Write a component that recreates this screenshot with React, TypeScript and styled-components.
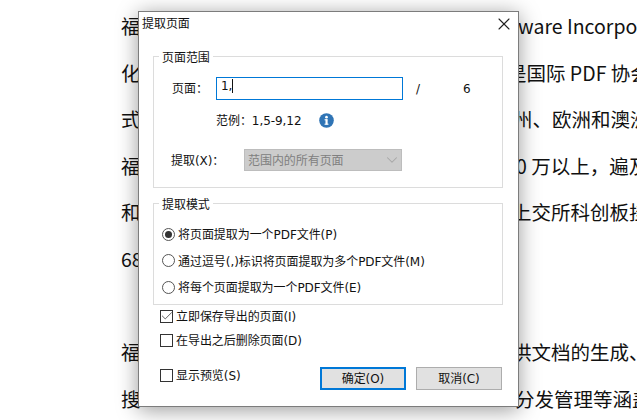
import React from 'react';
import styled, { createGlobalStyle } from 'styled-components';
import { FiX, FiCheck, FiChevronDown } from 'react-icons/fi';

const GlobalStyle = createGlobalStyle`
  html, body {
    margin: 0;
    padding: 0;
    width: 637px;
    height: 420px;
    overflow: hidden;
    background: #fff;
  }
  body {
    font-family: "Noto Sans CJK SC", "Liberation Sans", sans-serif;
  }
`;

const lines = [
  { left: '福', right: 'ware Incorporated', shift: 0 },
  { left: '化', right: '是国际 PDF 协会', shift: -11 },
  { left: '式', right: '州、欧洲和澳洲', shift: -5 },
  { left: '福', right: '0 万以上，遍及', shift: -2 },
  { left: '和', right: '上交所科创板挂', shift: -6 },
  { left: '68', right: '', shift: 0 },
  { left: '', right: '', shift: 0 },
  { left: '福', right: '供文档的生成、', shift: -6 },
  { left: '搜', right: '分发管理等涵盖', shift: -3 },
];

const App = () => {
  return (
    <Page>
      <GlobalStyle />
      <DocumentText>
        {lines.map((line, i) => (
          <DocLine key={i}>
            <DocLeft>{line.left}</DocLeft>
            <DocRight $shift={line.shift}>{line.right}</DocRight>
          </DocLine>
        ))}
      </DocumentText>

      <Dialog>
        <TitleBar>
          <Title>提取页面</Title>
          <CloseIcon />
        </TitleBar>
        <Body>
          <Group>
            <Legend>页面范围</Legend>
            <PageRow>
              <FieldLabel>页面：</FieldLabel>
              <PageInput>
                1,
                <Caret />
              </PageInput>
              <Slash>/</Slash>
              <PageCount>6</PageCount>
            </PageRow>
            <ExampleRow>
              <Label>范例：1,5-9,12</Label>
              <InfoIcon viewBox="0 0 16 16">
                <circle cx="8" cy="8" r="7.8" fill="#2f74b5" />
                <rect x="6.9" y="6.7" width="2.3" height="5.6" fill="#fff" />
                <rect x="5.9" y="6.7" width="3" height="1.1" fill="#fff" />
                <rect x="5.9" y="11.4" width="4.2" height="1.1" fill="#fff" />
                <circle cx="8" cy="4.4" r="1.4" fill="#fff" />
              </InfoIcon>
            </ExampleRow>
            <ExtractRow>
              <ExtractLabel>提取(X)：</ExtractLabel>
              <DisabledSelect>
                <Label>范围内的所有页面</Label>
                <SelectArrow />
              </DisabledSelect>
            </ExtractRow>
          </Group>

          <ModeGroup>
            <Legend>提取模式</Legend>
            <RadioRow>
              <Radio $checked />
              <Label>将页面提取为一个PDF文件(P)</Label>
            </RadioRow>
            <RadioRow>
              <Radio />
              <Label>通过逗号(,)标识将页面提取为多个PDF文件(M)</Label>
            </RadioRow>
            <RadioRow>
              <Radio />
              <Label>将每个页面提取为一个PDF文件(E)</Label>
            </RadioRow>
          </ModeGroup>

          <CheckRow>
            <CheckBox>
              <FiCheck />
            </CheckBox>
            <Label>立即保存导出的页面(I)</Label>
          </CheckRow>
          <CheckRow>
            <CheckBox />
            <Label>在导出之后删除页面(D)</Label>
          </CheckRow>

          <Footer>
            <PreviewCheck>
              <CheckBox />
              <Label>显示预览(S)</Label>
            </PreviewCheck>
            <Buttons>
              <Button $primary>确定(O)</Button>
              <Button>取消(C)</Button>
            </Buttons>
          </Footer>
        </Body>
      </Dialog>
    </Page>
  );
};

const Page = styled.div`
  position: relative;
  width: 637px;
  height: 420px;
  overflow: hidden;
  background: #fff;
`;

const DocumentText = styled.div`
  padding: 12px 0 0 121px;
  display: flex;
  flex-direction: column;
  color: #111;
  font-size: 19.5px;
`;

const DocLine = styled.div`
  display: flex;
  height: 46.6px;
  line-height: 28px;
  white-space: nowrap;
`;

const DocLeft = styled.span`
  width: 397px;
  flex-shrink: 0;
`;

const DocRight = styled.span<{ $shift: number }>`
  flex-shrink: 0;
  margin-left: ${({ $shift }) => $shift}px;
`;

const Dialog = styled.div`
  position: absolute;
  left: 138px;
  top: 11px;
  width: 381px;
  height: 396px;
  box-sizing: border-box;
  background: #fff;
  border: 1px solid #7c7c7c;
  box-shadow: 0 3px 20px rgba(0, 0, 0, 0.4);
  color: #111;
  font-family: "DejaVu Sans", "Noto Sans CJK SC", sans-serif;
  font-size: 12px;
  line-height: 16px;
  letter-spacing: -0.06px;
`;

// text sits 1px lower than the row centre, like the original dialog font
const Label = styled.span`
  padding-top: 2px;
`;

const TitleBar = styled.div`
  height: 24px;
  display: flex;
  align-items: center;
  justify-content: space-between;
  padding: 0 4px 0 3px;
`;

const Title = styled.div`
  font-size: 12px;
`;

const CloseIcon = styled(FiX)`
  width: 20px;
  height: 20px;
  stroke-width: 1.3;
  color: #222;
`;

const Body = styled.div`
  padding: 20px 15px 0 14px;
  display: flex;
  flex-direction: column;
`;

const Group = styled.div`
  position: relative;
  height: 132px;
  box-sizing: border-box;
  border: 1px solid #dcdcdc;
  padding: 20px 0 0 18px;
`;

const Legend = styled.div`
  position: absolute;
  left: 5px;
  top: -7px;
  padding: 0 3px;
  background: #fff;
  line-height: 16px;
  font-size: 12px;
`;

const PageRow = styled.div`
  display: flex;
  align-items: center;
`;

const FieldLabel = styled.div`
  width: 44px;
`;

const PageInput = styled.div`
  width: 187px;
  height: 23px;
  box-sizing: border-box;
  border: 1px solid #0078d7;
  padding: 0 4px;
  line-height: 16px;
  display: flex;
  align-items: flex-start;
`;

const Caret = styled.span`
  width: 1px;
  height: 14px;
  margin-top: 1px;
  background: #111;
`;

const Slash = styled.div`
  margin-left: 13px;
  width: 47px;
`;

const PageCount = styled.div``;

const ExampleRow = styled.div`
  display: flex;
  align-items: center;
  margin: 11px 0 0 44px;
`;

const InfoIcon = styled.svg`
  width: 15px;
  height: 15px;
  margin-left: 18px;
`;

const ExtractRow = styled.div`
  display: flex;
  align-items: center;
  margin: 20px 0 0 -1px;
`;

const ExtractLabel = styled.div`
  width: 73px;
  padding-top: 1px;
`;

const DisabledSelect = styled.div`
  width: 158px;
  height: 22px;
  box-sizing: border-box;
  background: #cccccc;
  border: 1px solid #bdbdbd;
  color: #808080;
  padding-left: 3px;
  display: flex;
  align-items: center;
  justify-content: space-between;
`;

const SelectArrow = styled(FiChevronDown)`
  width: 18px;
  height: 18px;
  stroke-width: 1.4;
  color: #a6a6a6;
`;

const ModeGroup = styled(Group)`
  margin: 15px 0 -1px;
  height: 102px;
  padding: 17px 0 0 8px;
  display: flex;
  flex-direction: column;
`;

const RadioRow = styled.div`
  display: flex;
  align-items: center;
  height: 26.5px;
  flex-shrink: 0;
`;

const Radio = styled.span<{ $checked?: boolean }>`
  width: 13px;
  height: 13px;
  box-sizing: border-box;
  border: 1px solid #555;
  border-radius: 50%;
  margin-right: 3px;
  display: flex;
  align-items: center;
  justify-content: center;
  &::after {
    content: '';
    width: 7px;
    height: 7px;
    border-radius: 50%;
    background: ${({ $checked }) => ($checked ? '#333' : 'transparent')};
  }
`;

const CheckRow = styled.div`
  display: flex;
  align-items: center;
  height: 24px;
  padding-left: 7px;
`;

const CheckBox = styled.span`
  width: 13px;
  height: 13px;
  box-sizing: border-box;
  border: 1px solid #333;
  margin-right: 3px;
  display: flex;
  align-items: center;
  justify-content: center;
  color: #555;
  svg {
    width: 14px;
    height: 14px;
    flex-shrink: 0;
    stroke-width: 1.6;
  }
`;

const Footer = styled.div`
  display: flex;
  justify-content: space-between;
  align-items: flex-start;
  margin-top: 15px;
`;

const PreviewCheck = styled.div`
  display: flex;
  align-items: center;
  height: 16px;
  padding-left: 7px;
`;

const Buttons = styled.div`
  display: flex;
  gap: 10px;
  margin-right: 1px;
`;

const Button = styled.div<{ $primary?: boolean }>`
  width: 86px;
  height: 23px;
  box-sizing: border-box;
  padding-top: 1px;
  background: #e1e1e1;
  border: ${({ $primary }) => ($primary ? '2px solid #0078d7' : '1px solid #adadad')};
  display: flex;
  align-items: center;
  justify-content: center;
`;

export default App;
